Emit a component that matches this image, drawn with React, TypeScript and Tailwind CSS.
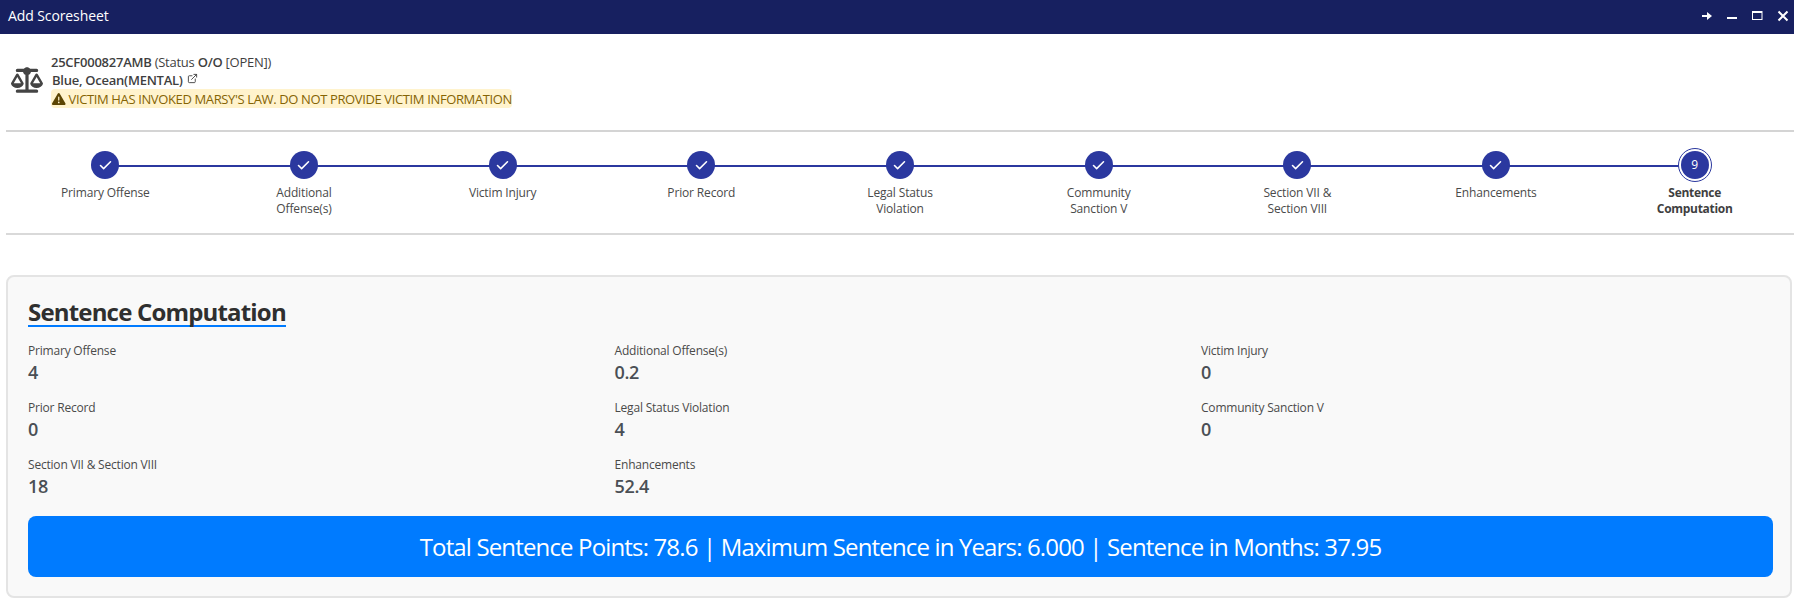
import { Check, ExternalLink } from "lucide-react";
import { FaScaleBalanced, FaTriangleExclamation } from "react-icons/fa6";

const steps = [
  ["Primary Offense"],
  ["Additional", "Offense(s)"],
  ["Victim Injury"],
  ["Prior Record"],
  ["Legal Status", "Violation"],
  ["Community", "Sanction V"],
  ["Section VII &", "Section VIII"],
  ["Enhancements"],
];

const items = [
  ["Primary Offense", "4"],
  ["Additional Offense(s)", "0.2"],
  ["Victim Injury", "0"],
  ["Prior Record", "0"],
  ["Legal Status Violation", "4"],
  ["Community Sanction V", "0"],
  ["Section VII & Section VIII", "18"],
  ["Enhancements", "52.4"],
];

function TitleBar() {
  return (
    <div className="flex h-[34px] items-center justify-between bg-[#172060] pl-2 pr-[5px] text-white">
      <span className="pb-[3px] text-[14px] tracking-[-0.1px]">Add Scoresheet</span>
      <div className="flex items-center gap-[14px] pb-[3px]">
        <svg width="12" height="12" viewBox="0 0 12 12" fill="#fff" aria-hidden="true">
          <path d="M1 5h5V2l5 4-5 4V7H1z" />
        </svg>
        <svg width="11" height="12" viewBox="0 0 11 12" fill="#fff" aria-hidden="true">
          <rect x="0" y="7" width="10" height="2" />
        </svg>
        <svg width="11" height="12" viewBox="0 0 11 12" fill="none" stroke="#fff" aria-hidden="true">
          <rect x="0.5" y="1.5" width="9.5" height="8" />
          <rect x="0.5" y="1" width="9.5" height="2" fill="#fff" stroke="none" />
        </svg>
        <svg width="12" height="12" viewBox="0 0 12 12" fill="none" stroke="#fff" strokeWidth="2" aria-hidden="true">
          <path d="M1.5 1.5l9 9M10.5 1.5l-9 9" />
        </svg>
      </div>
    </div>
  );
}

function CaseHeader() {
  return (
    <div className="ml-[6px] flex h-[98px] items-start border-b-2 border-[#d4d4d4] pl-[5px] pt-[19px] text-[#3f3f3f]">
      <FaScaleBalanced className="mt-[14px] mr-[8px] h-[26px] w-[32px] text-[#444]" />
      <div className="flex flex-col text-[13px] leading-[18px]">
        <div className="tracking-[-0.25px]">
          <b className="font-semibold">25CF000827AMB</b> (Status <b className="font-semibold">O/O</b> [OPEN])
        </div>
        <div className="ml-[1px] flex items-center gap-1 font-semibold tracking-[-0.25px]">
          Blue, Ocean(MENTAL)
          <ExternalLink className="mb-[3px] h-[11px] w-[11px]" strokeWidth={2} />
        </div>
        <div className="flex h-[19px] w-[461px] items-center gap-[3px] whitespace-nowrap rounded-[4px] bg-[#fff3cd] pl-[1px] text-[#856404] tracking-[-0.37px]">
          <FaTriangleExclamation className="h-[14px] w-[14px] text-[#5c4503]" />
          VICTIM HAS INVOKED MARSY'S LAW. DO NOT PROVIDE VICTIM INFORMATION
        </div>
      </div>
    </div>
  );
}

function Stepper() {
  return (
    <div className="ml-[6px] h-[103px] border-b-2 border-[#d9d9d9]">
      <div className="relative grid grid-cols-9 pt-[16px]">
        <div className="absolute left-[100px] right-[94px] top-[33px] h-[2px] bg-[#2b389f]" />
        {steps.map((label) => (
          <div key={label[0]} className="relative flex flex-col items-center">
            <div className="mt-[3px] flex h-[28px] w-[28px] items-center justify-center rounded-full bg-[#2b389f] text-white">
              <Check className="h-[15px] w-[15px]" strokeWidth={2.5} />
            </div>
            <div className="mt-[6px] text-center text-[12px] leading-[16px] text-[#4a4a4a] tracking-[-0.15px]">
              {label.map((line) => (
                <div key={line}>{line}</div>
              ))}
            </div>
          </div>
        ))}
        <div className="relative flex flex-col items-center">
          <div className="flex h-[34px] w-[34px] items-center justify-center rounded-full border border-[#2b389f] bg-white">
            <div className="flex h-[28px] w-[28px] items-center justify-center rounded-full bg-[#2b389f] text-[12px] text-white">
              9
            </div>
          </div>
          <div className="mt-[3px] text-center text-[12px] font-bold leading-[16px] text-[#3f3f3f] tracking-[-0.3px]">
            <div>Sentence</div>
            <div>Computation</div>
          </div>
        </div>
      </div>
    </div>
  );
}

function Computation() {
  return (
    <div className="ml-[6px] mr-[2px] mt-[40px] h-[323px] rounded-[8px] border-2 border-[#e4e4e4] bg-[#f9f9f9] pl-[20px] pr-[17px] pt-[21px] text-[#4a4a4a]">
      <h2 className="w-fit border-b-2 border-[#007bff] text-[24px] font-bold leading-[27px] text-[#2f2f2f] tracking-[-0.82px]">
        Sentence Computation
      </h2>
      <div className="mt-[15px] grid grid-cols-3 gap-x-[14.5px]">
        {items.map(([label, value]) => (
          <div key={label} className="h-[57px]">
            <div className="text-[12px] leading-[18px] tracking-[-0.2px]">{label}</div>
            <div className="mt-[1px] text-[18px] font-semibold leading-[22px] text-[#4a4f55] tracking-[-0.3px]">{value}</div>
          </div>
        ))}
      </div>
      <div className="mt-[3px] flex h-[61px] items-center justify-center rounded-[8px] bg-[#007bff] text-[24px] text-white tracking-[-0.85px]">
        Total Sentence Points: 78.6 | Maximum Sentence in Years: 6.000 | Sentence in Months: 37.95
      </div>
    </div>
  );
}

export default function App() {
  return (
    <div className="h-[598px] w-[1794px] overflow-hidden bg-white font-['Open_Sans',sans-serif]">
      <TitleBar />
      <CaseHeader />
      <Stepper />
      <Computation />
    </div>
  );
}
